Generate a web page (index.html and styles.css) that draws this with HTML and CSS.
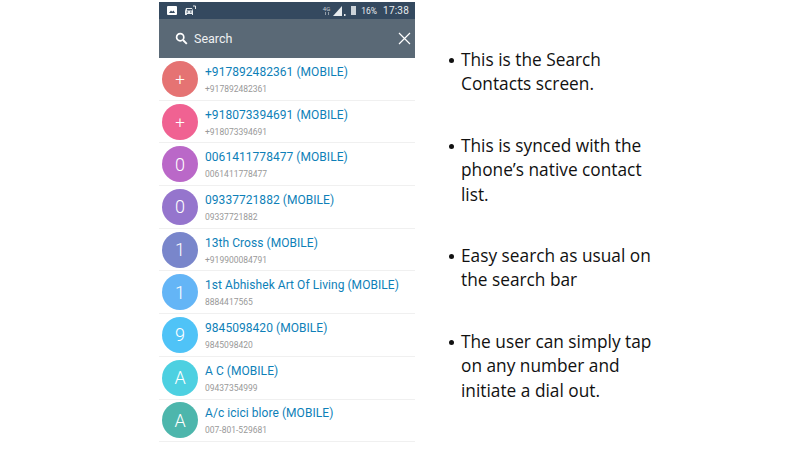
FILE: index.html
```html
<!DOCTYPE html>
<html lang="en">
<head>
<meta charset="utf-8">
<title>Search Contacts</title>
<link rel="stylesheet" href="styles.css">
</head>
<body>
<div class="slide">
  <section class="phone">
    <div class="status">
      <svg class="ic-img" width="10" height="9" viewBox="0 0 10 9"><rect width="10" height="9" rx="1" fill="#fff"/><path d="M2 7l2-2.5 1.2 1.2L6.5 4.5 8 7z" fill="#34495f"/></svg>
      <svg class="ic-car" width="12" height="11" viewBox="0 0 12 11"><path d="M1 6l1-3h6l1 3v4H8V9H3v1H1z" fill="#e8ecef"/><rect x="2.5" y="6.5" width="1.5" height="1" fill="#34495f"/><rect x="6" y="6.5" width="1.5" height="1" fill="#34495f"/><rect x="3" y="4" width="5" height="1.5" fill="#34495f"/><path d="M9 1h2.5v3" fill="none" stroke="#e8ecef"/></svg>
      <span class="spacer"></span>
      <span class="net">4G<svg class="ic-arrows" width="6" height="3" viewBox="0 0 6 3"><path d="M1.5 0v3M4.500 0v3" stroke="#aab4bd" stroke-width="1"/></svg></span>
      <svg class="ic-sig" width="13" height="11" viewBox="0 0 13 11"><path d="M0 11L9 1v10z" fill="#e8ecef"/><rect x="11" y="9" width="1.500" height="2" fill="#e8ecef"/></svg>
      <span class="batt"></span>
      <span class="pct">16%</span>
      <span class="time">17:38</span>
    </div>
    <div class="searchbar">
      <svg class="ic-search" width="13" height="13" viewBox="0 0 13 13"><circle cx="5.200" cy="5.200" r="3.600" fill="none" stroke="#fff" stroke-width="1.700"/><path d="M8 8l3.800 3.800" stroke="#fff" stroke-width="1.900"/></svg>
      <span class="search-label">Search</span>
      <span class="spacer"></span>
      <svg class="ic-close" width="13" height="13" viewBox="0 0 13 13"><path d="M1 1l11 11M12 1L1 12" stroke="#fff" stroke-width="1.200"/></svg>
    </div>
    <ul class="list">
      <li class="row"><span class="avatar small c1">+</span><div class="info"><div class="name">+917892482361 (MOBILE)</div><div class="num">+917892482361</div></div></li>
      <li class="row"><span class="avatar small c2">+</span><div class="info"><div class="name">+918073394691 (MOBILE)</div><div class="num">+918073394691</div></div></li>
      <li class="row"><span class="avatar c3">0</span><div class="info"><div class="name">0061411778477 (MOBILE)</div><div class="num">0061411778477</div></div></li>
      <li class="row"><span class="avatar c4">0</span><div class="info"><div class="name">09337721882 (MOBILE)</div><div class="num">09337721882</div></div></li>
      <li class="row"><span class="avatar c5">1</span><div class="info"><div class="name">13th Cross (MOBILE)</div><div class="num">+919900084791</div></div></li>
      <li class="row"><span class="avatar c6">1</span><div class="info"><div class="name">1st Abhishek Art Of Living (MOBILE)</div><div class="num">8884417565</div></div></li>
      <li class="row"><span class="avatar c7">9</span><div class="info"><div class="name">9845098420 (MOBILE)</div><div class="num">9845098420</div></div></li>
      <li class="row"><span class="avatar c8">A</span><div class="info"><div class="name">A C (MOBILE)</div><div class="num">09437354999</div></div></li>
      <li class="row"><span class="avatar c9">A</span><div class="info"><div class="name">A/c icici blore (MOBILE)</div><div class="num">007-801-529681</div></div></li>
    </ul>
  </section>
  <ul class="notes">
    <li class="note n1">This is the Search Contacts screen.</li>
    <li class="note n2">This is synced with the phone’s native contact list.</li>
    <li class="note n3">Easy search as usual on the search bar</li>
    <li class="note n4">The user can simply tap on any number and initiate a dial out.</li>
  </ul>
</div>
</body>
</html>
```
FILE: styles.css
```css
* { box-sizing: border-box; margin: 0; padding: 0; }
html, body { width: 800px; height: 450px; overflow: hidden; background: #fff; }
ul { list-style: none; }
.slide { display: flex; width: 800px; height: 450px; padding: 2px 0 0 159px; }
.phone { width: 256px; height: 448px; overflow: hidden; font-family: Roboto, sans-serif; flex: none; }
.status { display: flex; align-items: center; height: 17px; padding: 0 6px 0 8px; background: #34495f; color: #e8ecef; font-size: 9px; }
.ic-car { margin-left: 7px; }
.spacer { flex: 1; }
.net { display: flex; flex-direction: column; align-items: center; font-size: 6px; line-height: 6px; margin-right: 3px; opacity: .8; }
.batt { width: 5px; height: 9px; margin: 0 0 0 5px; background: #ccd3d9; }
.pct { margin-left: 5px; font-size: 8.5px; }
.time { margin-left: 6px; font-size: 10px; letter-spacing: .2px; }
.searchbar { display: flex; align-items: center; height: 39px; padding: 0 4px 0 16px; background: #5a6976; color: #eef0f2; }
.search-label { margin-left: 6px; font-size: 12.5px; }
.list { background: #fff; }
.row { display: flex; align-items: center; height: 42.7px; padding-left: 3px; border-bottom: 1px solid #f0f0f0; }
.avatar { flex: none; width: 36px; height: 36px; border-radius: 50%; display: flex; align-items: center; justify-content: center; color: #fff; font-size: 18px; font-weight: 300; }
.small { font-size: 17px; }
.c1 { background: #e57373; }
.c2 { background: #f06292; }
.c3 { background: #ba68c8; }
.c4 { background: #9575cd; }
.c5 { background: #7986cb; }
.c6 { background: #64b5f6; }
.c7 { background: #4fc3f7; }
.c8 { background: #4dd0e1; }
.c9 { background: #4db6ac; }
.info { margin-left: 7px; padding-top: 2px; }
.name { font-size: 12px; line-height: 15px; color: #0e7fb8; letter-spacing: .05px; }
.num { margin-top: 4px; font-size: 8.5px; line-height: 11px; color: #999; }
.notes { width: 215px; margin-left: 30px; font-family: "Open Sans", sans-serif; font-size: 17.3px; line-height: 24.4px; color: #111; padding-top: 46px; }
.note { position: relative; padding-left: 16px; }
.note::before { content: ""; position: absolute; left: 4px; top: 10px; width: 5px; height: 5px; border-radius: 50%; background: #111; }
.n2, .n3, .n4 { margin-top: 37px; }
```
